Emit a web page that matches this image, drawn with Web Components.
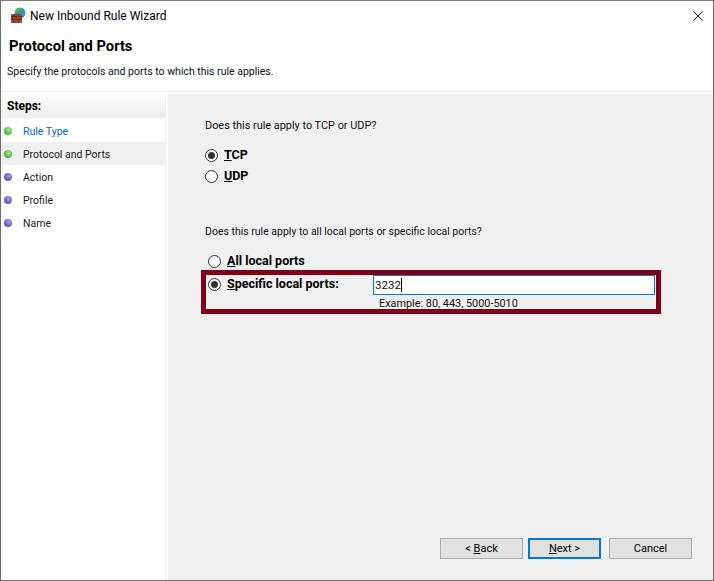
<!DOCTYPE html>
<html><head><meta charset="utf-8"><style>
html,body{margin:0;padding:0;background:#fff}
body{font-family:Roboto,"Liberation Sans",sans-serif;color:#000}
</style></head><body>
<wizard-window>
<wizard-title slot="title">New Inbound Rule Wizard</wizard-title>
<wizard-header slot="header" heading="Protocol and Ports">Specify the protocols and ports to which this rule applies.</wizard-header>
<step-list slot="steps">
<step-item state="done" link>Rule Type</step-item>
<step-item state="done" current>Protocol and Ports</step-item>
<step-item>Action</step-item>
<step-item>Profile</step-item>
<step-item>Name</step-item>
</step-list>
<protocol-page slot="page"></protocol-page>
</wizard-window>
<script>
function def(name,css,html){
  customElements.define(name,class extends HTMLElement{
    constructor(){super();const r=this.attachShadow({mode:'open'});r.innerHTML='<style>'+css+'</style>'+(typeof html==='function'?html(this):html);}
  });
}
const F='font-family:Roboto,"Liberation Sans",sans-serif;';
def('wizard-window',`
:host{display:flex;flex-direction:column;box-sizing:border-box;width:714px;height:581px;border:1px solid #6d6d6d;border-top-color:#7a7a7a;background:#fff}
.body{flex:1;display:flex;min-height:0;border-top:1px solid #ececec;padding-top:2px;background:#fff}
.side{width:164px;flex:none;border-right:1px solid #efefef;margin-right:2px;background:#fff}
.main{flex:1;background:#f0f0f0}
`,`<slot name="title"></slot><slot name="header"></slot><div class="body"><div class="side"><slot name="steps"></slot></div><div class="main"><slot name="page"></slot></div></div>`);
def('wizard-title',`
:host{display:flex;align-items:center;height:29px;padding-left:9px;font-size:12px;color:#000;`+F+`}
.i{flex:none;margin-right:4px;margin-top:-1px}
span{flex:1}
.x{flex:none;width:10px;height:10px;margin:0 10px 0 0}
`,`<svg class="i" width="16" height="16" viewBox="0 0 16 16">
<circle cx="10" cy="6" r="5.500" fill="#2f8fd8"/><path d="M7 1.500c2-1 4.500-1 5.500.8-1 1.500-3 .7-3.500 2S7 6 5.500 6.200 5.500 2.500 7 1.500z" fill="#55b848"/><path d="M12 6.500c1.300-.8 2.300-.6 3.300-.5-.2 2-1.300 3.500-2.800 4.200z" fill="#4cab40"/>
<rect x="1" y="7" width="11" height="9" fill="#a8493a"/>
<path d="M1 9.500h11M1 12.500h11M4 7v2.500M8 7v2.500M2.500 9.500v3M6 9.500v3M10 9.500v3M4 12.500V16M8 12.500V16" stroke="#6e2a20" stroke-width="1" fill="none"/></svg><span><slot></slot></span>
<svg class="x" viewBox="0 0 10 10"><path d="M.5 .5l9 9M9.500 .5l-9 9" stroke="#111" stroke-width="1" fill="none"/></svg>`);
def('wizard-header',`
:host{display:block;height:61px;box-sizing:border-box;padding:7px 0 0 6px;`+F+`}
h1{margin:0 0 0 2px;font-size:14.700px;font-weight:700;line-height:18px;color:#000}
p{margin:9px 0 0;font-size:10.500px;line-height:16px;color:#111}
`,h=>`<h1>${h.getAttribute('heading')}</h1><p><slot></slot></p>`);
def('step-list',`
:host{display:block;`+F+`}
.h{height:24px;line-height:24px;padding-left:6px;font-size:12px;font-weight:700;background:linear-gradient(#fff,#ececec);color:#000}
.l{padding-top:1px;display:block}
`,`<div class="h">Steps:</div><div class="l"><slot></slot></div>`);
def('step-item',`
:host{display:flex;align-items:center;box-sizing:border-box;height:23px;padding-top:1px;font-size:10.500px;color:#1b1b1b;`+F+`}
:host([current]){background:#f0f0f0}
:host([link]){color:#0066cc}
.d{width:8px;height:8px;border-radius:50%;margin:0 11px 0 3px;flex:none;background:radial-gradient(circle at 60% 35%,#9ca0ea,#5d58b8 70%)}
:host([state=done]) .d{background:radial-gradient(circle at 60% 35%,#a6ec8e,#4db03a 70%)}
`,`<span class="d"></span><slot></slot>`);
def('radio-opt',`
:host{display:flex;align-items:center;height:14px;line-height:14px;white-space:nowrap;font-size:12.500px;font-weight:700;color:#000;`+F+`}
.r{box-sizing:border-box;width:13px;height:13px;border:1px solid #333;border-radius:50%;background:#fff;flex:none;margin-right:6px;display:flex;align-items:center;justify-content:center}
:host([checked]) .i{width:7px;height:7px;border-radius:50%;background:#333}
`,`<span class="r"><span class="i"></span></span><span><slot></slot></span>`);
def('wiz-button',`
:host{box-sizing:border-box;display:flex;align-items:center;justify-content:center;height:21px;width:83px;background:#e1e1e1;border:1px solid #adadad;font-size:11px;color:#000;`+F+`}
:host([default]){width:73px;border:2px solid #0078d7}
`,`<span><slot></slot></span>`);
def('protocol-page',`
:host{display:flex;flex-direction:column;height:100%;box-sizing:border-box;padding:24px 21px 21px 37px;font-size:10.900px;color:#111;`+F+`}
p{margin:0;line-height:16px}
.g1{display:flex;flex-direction:column;gap:7px;margin:14px 0 0 0}
.q2{margin-top:41px;font-size:10.500px}
.g2{margin:14px 0 0 3px}
.mark{box-sizing:border-box;width:460px;height:44px;border:5px solid #800015;margin:2px 0 0 -4px;padding:0 0 0 2px;display:flex;justify-content:space-between}
.mark radio-opt{margin-top:2px}
.col{margin-right:1px;width:282px}
.ex{margin:1px 0 0 6px;line-height:15px;font-size:10.870px}
.inp{box-sizing:border-box;height:20px;border:1px solid #0078d7;background:#fff;display:flex;align-items:center;padding-left:1px;color:#111;font-size:11.500px}
.caret{width:1px;height:14px;background:#000}
.btns{margin-top:auto;display:flex;gap:5px;padding-left:235px}
.btns wiz-button:last-child{margin-left:3px}
u{text-decoration:underline}
`,`<p>Does this rule apply to TCP or UDP?</p>
<div class="g1"><radio-opt checked><u>T</u>CP</radio-opt><radio-opt><u>U</u>DP</radio-opt></div>
<p class="q2">Does this rule apply to all local ports or specific local ports?</p>
<div class="g2"><radio-opt><u>A</u>ll local ports</radio-opt></div>
<div class="mark"><radio-opt checked><u>S</u>pecific local ports:</radio-opt><div class="col"><div class="inp">3232<span class="caret"></span></div><p class="ex">Example: 80, 443, 5000-5010</p></div></div>
<div class="btns"><wiz-button>&lt; <u>B</u>ack</wiz-button><wiz-button default><u>N</u>ext &gt;</wiz-button><wiz-button>Cancel</wiz-button></div>`);
</script>
</body></html>
